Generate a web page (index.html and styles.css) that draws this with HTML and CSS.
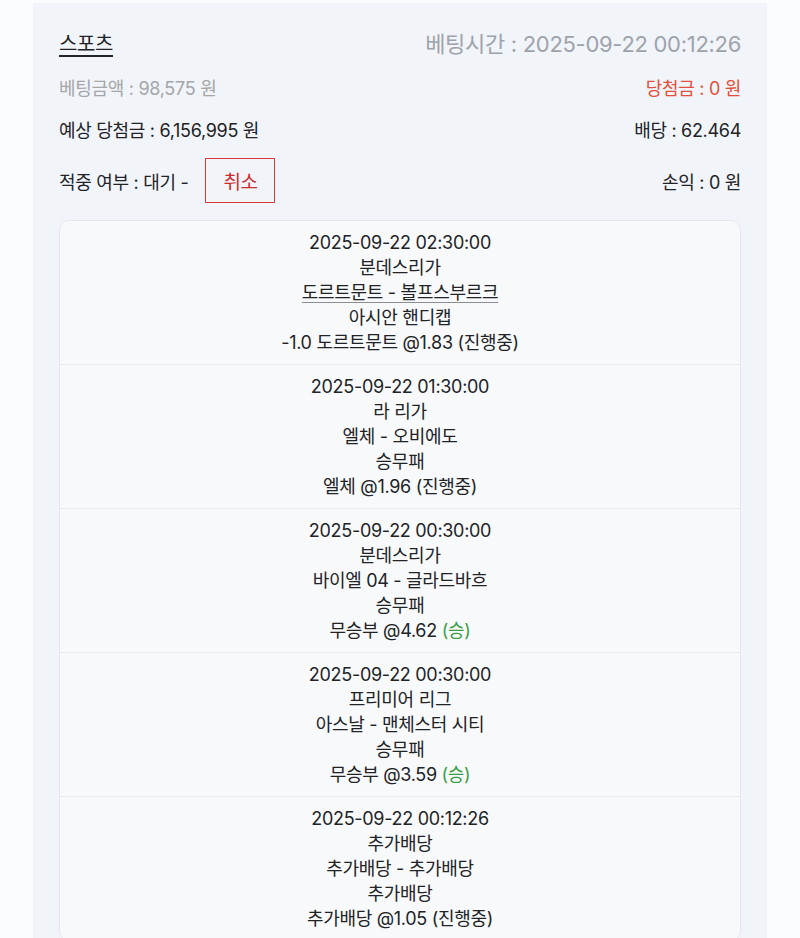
FILE: index.html
```html
<!DOCTYPE html>
<html lang="ko">
<head>
<meta charset="utf-8">
<title>베팅 내역</title>
<link rel="stylesheet" href="styles.css">
</head>
<body>
<div class="panel">
  <div class="row row-head">
    <span class="title">스포츠</span>
    <span class="bet-time">베팅시간 : 2025-09-22 00:12:26</span>
  </div>
  <div class="row row-sm">
    <span class="muted">베팅금액 : 98,575 원</span>
    <span class="win">당첨금 : 0 원</span>
  </div>
  <div class="row row-sm">
    <span>예상 당첨금 : 6,156,995 원</span>
    <span>배당 : 62.464</span>
  </div>
  <div class="row row-btn">
    <span class="status">적중 여부 : 대기 - <button class="cancel">취소</button></span>
    <span>손익 : 0 원</span>
  </div>
  <div class="card">
    <div class="item">
      <div>2025-09-22 02:30:00</div>
      <div>분데스리가</div>
      <div><span class="link">도르트문트 - 볼프스부르크</span></div>
      <div>아시안 핸디캡</div>
      <div>-1.0 도르트문트 @1.83 (진행중)</div>
    </div>
    <div class="item">
      <div>2025-09-22 01:30:00</div>
      <div>라 리가</div>
      <div>엘체 - 오비에도</div>
      <div>승무패</div>
      <div>엘체 @1.96 (진행중)</div>
    </div>
    <div class="item">
      <div>2025-09-22 00:30:00</div>
      <div>분데스리가</div>
      <div>바이엘 04 - 글라드바흐</div>
      <div>승무패</div>
      <div>무승부 @4.62 <span class="ok">(승)</span></div>
    </div>
    <div class="item">
      <div>2025-09-22 00:30:00</div>
      <div>프리미어 리그</div>
      <div>아스날 - 맨체스터 시티</div>
      <div>승무패</div>
      <div>무승부 @3.59 <span class="ok">(승)</span></div>
    </div>
    <div class="item">
      <div>2025-09-22 00:12:26</div>
      <div>추가배당</div>
      <div>추가배당 - 추가배당</div>
      <div>추가배당</div>
      <div>추가배당 @1.05 (진행중)</div>
    </div>
  </div>
</div>
</body>
</html>
```

FILE: styles.css
```css
html, body {
  margin: 0;
  padding: 0;
  background: #fbfcfd;
}
body {
  font-family: Inter, "Noto Sans CJK KR", sans-serif;
  color: #222326;
  letter-spacing: -0.4px;
}
.panel {
  margin: 3px 33px 0;
  padding: 22px 26px 0;
  background: #f1f4f9;
  min-height: 935px;
  box-sizing: border-box;
}
.row {
  display: flex;
  justify-content: space-between;
  align-items: center;
}
.row-head {
  height: 34px;
}
.title {
  font-size: 20px;
  text-decoration: underline;
  text-underline-offset: 4px;
  text-decoration-thickness: 1.5px;
}
.bet-time {
  font-size: 22px;
  letter-spacing: -0.3px;
  color: #9ea3ab;
}
.row-sm {
  height: 28px;
  margin-top: 14px;
  font-size: 18px;
  letter-spacing: -0.3px;
}
.muted {
  color: #a4a6aa;
}
.win {
  color: #e1503c;
}
.row-btn {
  height: 45px;
  margin-top: 15px;
  font-size: 18px;
  letter-spacing: -0.3px;
}
.status {
  display: flex;
  align-items: center;
}
.cancel {
  margin-left: 17px;
  width: 70px;
  height: 45px;
  border: 1.5px solid #d2393a;
  background: transparent;
  color: #cc2a2e;
  font-family: inherit;
  font-size: 19px;
  letter-spacing: -0.4px;
  padding: 0;
}
.card {
  margin-top: 17px;
  background: #f8f9fb;
  border: 1px solid #e3e6eb;
  border-radius: 10px;
  text-align: center;
  font-size: 18px;
  line-height: 25px;
  letter-spacing: -0.3px;
}
.item {
  padding: 9px 0;
  border-top: 1px solid #e8ebef;
}
.item:first-child {
  border-top: none;
}
.link {
  text-decoration: underline;
  text-decoration-color: #8a8d92;
  text-underline-offset: 3px;
}
.ok {
  color: #3b9e46;
}
```
